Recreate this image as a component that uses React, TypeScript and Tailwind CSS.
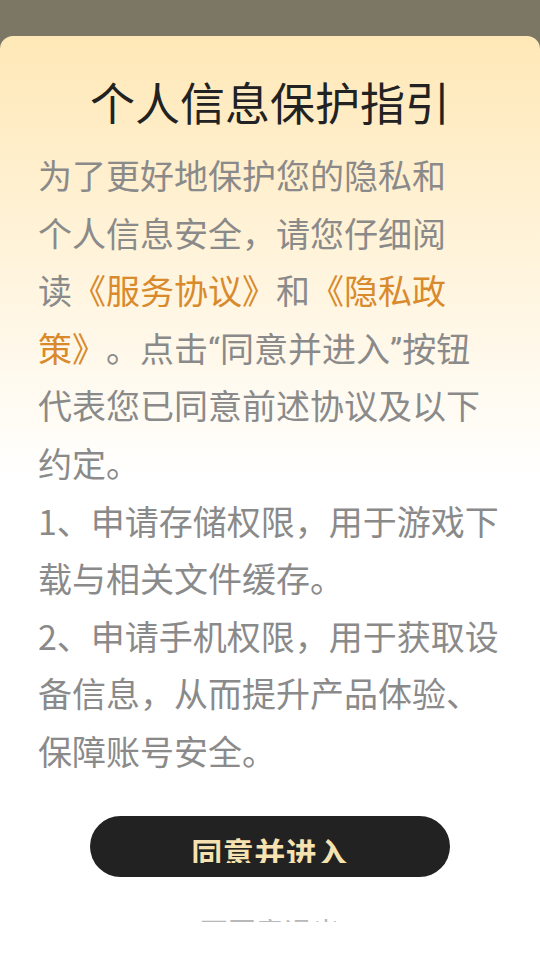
const lines: { text: string; link?: boolean; latin?: boolean }[][] = [
    [{ text: "为了更好地保护您的隐私和" }],
    [{ text: "个人信息安全，请您仔细阅" }],
    [{ text: "读" }, { text: "《服务协议》", link: true }, { text: "和" }, { text: "《隐私政", link: true }],
    [
        { text: "策》", link: true },
        { text: "。点击" },
        { text: "“", latin: true },
        { text: "同意并进入" },
        { text: "”", latin: true },
        { text: "按钮" },
    ],
    [{ text: "代表您已同意前述协议及以下" }],
    [{ text: "约定。" }],
    [{ text: "1、申请存储权限，用于游戏下" }],
    [{ text: "载与相关文件缓存。" }],
    [{ text: "2、申请手机权限，用于获取设" }],
    [{ text: "备信息，从而提升产品体验、" }],
    [{ text: "保障账号安全。" }],
];

export default function App() {
    return (
        <div className="flex flex-col h-[960px] w-[540px] overflow-hidden bg-[#7c7665] font-['Noto_Sans_CJK_SC','Noto_Sans',sans-serif]">
            <div className="h-[36px] shrink-0" />
            <div className="flex flex-col flex-1 rounded-t-[13px] bg-[linear-gradient(180deg,#ffe8b7_0%,#ffffff_48%)]">
                <h1 className="pt-[37px] text-center text-[45px] leading-[58px] text-[#222222] font-normal">
                    个人信息保护指引
                </h1>

                <div className="mt-[15px] pl-[38px] text-[34px] leading-[57.6px] text-[#8a8a8a] [text-spacing-trim:space-all]">
                    {lines.map((line, i) => (
                        <div key={i} className="h-[57.6px] whitespace-nowrap">
                            {line.map((part, j) => (
                                <span
                                    key={j}
                                    className={
                                        part.link
                                            ? "text-[#d88a2c]"
                                            : part.latin
                                            ? "font-['Roboto',sans-serif] leading-none"
                                            : undefined
                                    }
                                >
                                    {part.text}
                                </span>
                            ))}
                        </div>
                    ))}
                </div>

                <div className="flex justify-center mt-[36px]">
                    <button className="flex justify-center w-[360px] h-[61px] rounded-full bg-[#222222]">
                        <span className="mt-[20px] h-[27px] overflow-hidden text-[31px] leading-[32px] font-bold text-[#f6e2b0] tracking-[0.5px]">
                            同意并进入
                        </span>
                    </button>
                </div>

                <div className="flex justify-center mt-[42px]">
                    <div className="h-[3px] overflow-hidden">
                        <span className="block text-[28px] leading-[28px] text-[#b8b8b8] -mt-[2px]">不同意退出</span>
                    </div>
                </div>
            </div>
        </div>
    );
}
